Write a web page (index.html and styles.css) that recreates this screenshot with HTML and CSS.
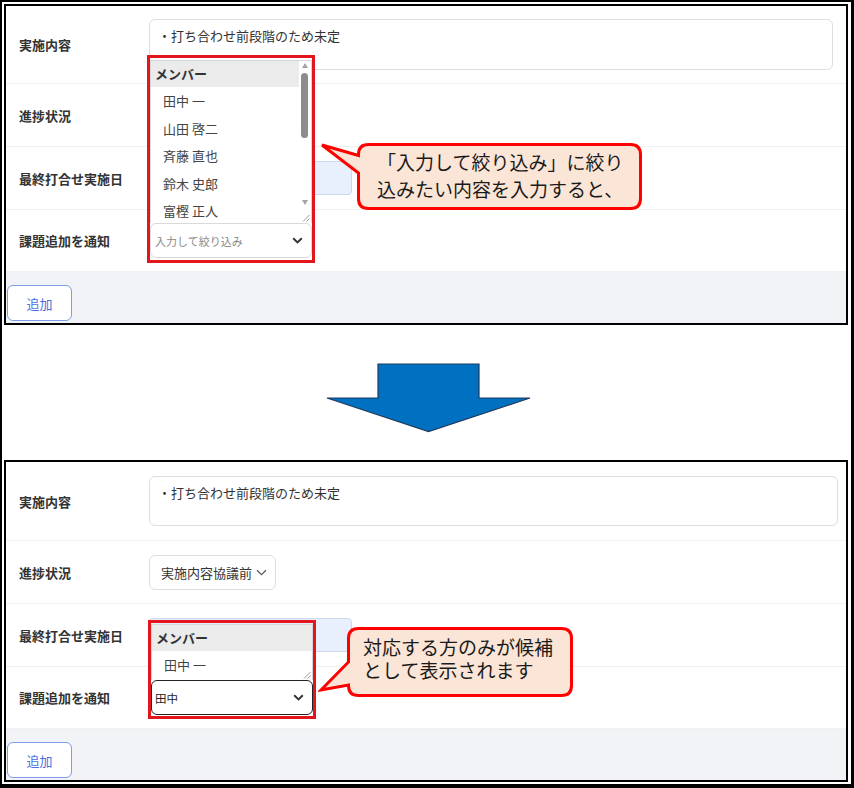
FILE: index.html
```html
<!DOCTYPE html>
<html lang="ja">
<head>
<meta charset="utf-8">
<title>課題追加の通知先</title>
<link rel="stylesheet" href="styles.css">
</head>
<body>
<div class="frame">

  <!-- before: full member list open -->
  <section class="panel">
    <div class="row row-note">
      <div class="label">実施内容</div>
      <div class="note">・打ち合わせ前段階のため未定</div>
    </div>
    <div class="row">
      <div class="label">進捗状況</div>
    </div>
    <div class="row">
      <div class="label">最終打合せ実施日</div>
      <div class="date"></div>
    </div>
    <div class="row">
      <div class="label">課題追加を通知</div>
      <div class="picker">
        <div class="combo">
          <span class="placeholder">入力して絞り込み</span>
          <svg class="chev" width="11" height="7" viewBox="0 0 11 7"><path d="M1.2 1.2 L5.5 5.4 L9.8 1.2" fill="none" stroke="#333" stroke-width="2"/></svg>
        </div>
        <div class="listbox listbox-long">
          <div class="options">
            <div class="group">メンバー</div>
            <div class="option">田中 一</div>
            <div class="option">山田 啓二</div>
            <div class="option">斉藤 直也</div>
            <div class="option">鈴木 史郎</div>
            <div class="option">富樫 正人</div>
          </div>
          <div class="scrollbar">
            <span class="tri tri-up"></span>
            <span class="thumb"></span>
            <span class="tri tri-down"></span>
          </div>
          <svg class="grip" width="8" height="8" viewBox="0 0 8 8"><path d="M7.5 1 L1 7.5 M7.5 4.5 L4.5 7.5" stroke="#999" stroke-width="1"/></svg>
        </div>
        <div class="mark mark-long"></div>
      </div>
    </div>
    <div class="footer"><button class="add">追加</button></div>
  </section>

  <div class="between">
    <svg class="down-arrow" width="205" height="70" viewBox="0 0 205 70">
      <polygon points="52,1 153,1 153,35 204,35 102.5,68.5 1,35 52,35" fill="#0070c0" stroke="#1d3b60" stroke-width="1.2"/>
    </svg>
  </div>

  <!-- after: list filtered by the typed name -->
  <section class="panel panel-after">
    <div class="row row-note">
      <div class="label">実施内容</div>
      <div class="note">・打ち合わせ前段階のため未定</div>
    </div>
    <div class="row">
      <div class="label">進捗状況</div>
      <div class="select">実施内容協議前
        <svg class="thin-chev" width="11" height="7" viewBox="0 0 11 7"><path d="M1 1.2 L5.5 5.6 L10 1.2" fill="none" stroke="#555" stroke-width="1.2"/></svg>
      </div>
    </div>
    <div class="row">
      <div class="label">最終打合せ実施日</div>
      <div class="date"></div>
    </div>
    <div class="row">
      <div class="label">課題追加を通知</div>
      <div class="picker picker-after">
        <div class="combo combo-focus">
          <span class="value">田中</span>
          <svg class="chev" width="11" height="7" viewBox="0 0 11 7"><path d="M1.2 1.2 L5.5 5.4 L9.8 1.2" fill="none" stroke="#333" stroke-width="2"/></svg>
        </div>
        <div class="listbox listbox-short">
          <div class="options">
            <div class="group">メンバー</div>
            <div class="option">田中 一</div>
          </div>
          <svg class="grip" width="8" height="8" viewBox="0 0 8 8"><path d="M7.5 1 L1 7.5 M7.5 4.5 L4.5 7.5" stroke="#999" stroke-width="1"/></svg>
        </div>
        <div class="mark mark-short"></div>
      </div>
    </div>
    <div class="footer"><button class="add">追加</button></div>
  </section>

  <div class="callout callout-top">
    <svg class="bubble" width="325" height="72" viewBox="0 0 325 72">
      <path d="M48.5 3.5 H310.5 Q320.5 3.5 320.5 13.5 V57.5 Q320.5 67.5 310.5 67.5 H48.5 Q38.5 67.5 38.5 57.5 V32 L2 4 L38.5 14.5 V13.5 Q38.5 3.5 48.5 3.5 Z" fill="#fbe5d6" stroke="#f00" stroke-width="3" stroke-linejoin="miter"/>
    </svg>
    <p class="callout-text">「入力して絞り込み」に絞り<br>込みたい内容を入力すると、</p>
  </div>

  <div class="callout callout-bottom">
    <svg class="bubble" width="258" height="76" viewBox="0 0 258 76">
      <path d="M40.5 4.5 H243.5 Q253.5 4.5 253.5 14.5 V61.5 Q253.5 71.5 243.5 71.5 H40.5 Q30.5 71.5 30.5 61.5 V61 L3 66 L30.5 38 V14.5 Q30.5 4.5 40.5 4.5 Z" fill="#fbe5d6" stroke="#f00" stroke-width="3" stroke-linejoin="miter"/>
    </svg>
    <p class="callout-text">対応する方のみが候補<br>として表示されます</p>
  </div>

</div>
</body>
</html>
```

FILE: styles.css
```css
* {
  box-sizing: border-box;
}

body {
  margin: 0;
  background: #fff;
  font-family: "Noto Sans CJK JP", "Noto Sans", sans-serif;
  color: #333;
}

.frame {
  position: relative;
  width: 854px;
  height: 788px;
  border-style: solid;
  border-color: #000;
  border-width: 2px 3px 4px 2px;
  padding: 2px 3px 2px 2px;
  display: flex;
  flex-direction: column;
}

/* form panels */
.panel {
  height: 321px;
  border: 2px solid #000;
  background: #fff;
  display: flex;
  flex-direction: column;
}

.panel-after {
  height: 322px;
}

.row {
  display: flex;
  align-items: center;
  height: 63px;
  padding: 0 13px;
  border-bottom: 1px solid #f0f0f0;
  flex-shrink: 0;
}

.row:nth-child(4) {
  height: 62px;
}

.row-note {
  height: 78px;
}

.panel-after .row-note {
  height: 79px;
}

.label {
  width: 130px;
  flex-shrink: 0;
  font-size: 13px;
  font-weight: bold;
  color: #333;
}

.note {
  flex: 1;
  height: 51px;
  border: 1px solid #dedede;
  border-radius: 6px;
  padding: 7px 8px;
  font-size: 13px;
  line-height: 18px;
  color: #333;
}

.panel-after .note {
  margin-right: -5px;
  height: 50px;
}

.select {
  height: 35px;
  width: 127px;
  border: 1px solid #dedede;
  border-radius: 6px;
  padding: 0 8px 0 11px;
  display: flex;
  align-items: center;
  justify-content: space-between;
  font-size: 13px;
  color: #333;
}

.date {
  width: 203px;
  height: 34px;
  background: #e8f0fe;
  border: 1px solid #cbd8ee;
  border-radius: 4px;
}

/* member picker */
.picker {
  position: relative;
  width: 162px;
  height: 35px;
  margin-left: 1px;
}

.picker-after {
  margin-left: 2px;
}

.combo {
  position: relative;
  z-index: 2;
  height: 35px;
  border: 1px solid #d9d9d9;
  border-radius: 6px;
  background: #fff;
  display: flex;
  align-items: center;
  justify-content: space-between;
  padding: 0 8px 0 4px;
}

.combo-focus {
  border: 1.5px solid #222;
  padding-left: 3px;
}

.placeholder {
  font-size: 11px;
  color: #8a8a8a;
}

.value {
  font-size: 11.5px;
  color: #222;
}

.listbox {
  position: absolute;
  left: 0;
  right: 0;
  bottom: 100%;
  z-index: 2;
  background: #fff;
  border: 1px solid #d6d6d6;
  border-bottom: none;
  display: flex;
  overflow: hidden;
}

.listbox-long {
  height: 163px;
}

.listbox-short {
  height: 56px;
}

.options {
  flex: 1;
  overflow: hidden;
}

.group {
  height: 26px;
  line-height: 26px;
  padding-left: 4px;
  background: #ebebeb;
  font-size: 13px;
  font-weight: bold;
  color: #333;
}

.option {
  height: 27.6px;
  line-height: 27.6px;
  padding-left: 12px;
  font-size: 13px;
  color: #444;
}

.scrollbar {
  position: relative;
  width: 12px;
  flex-shrink: 0;
}

.tri {
  position: absolute;
  left: 3px;
  width: 0;
  height: 0;
  border-left: 3.5px solid transparent;
  border-right: 3.5px solid transparent;
}

.tri-up {
  top: 2px;
  border-bottom: 5px solid #a3a3a3;
}

.tri-down {
  top: 139px;
  border-top: 5px solid #a3a3a3;
}

.thumb {
  position: absolute;
  left: 2px;
  top: 12px;
  width: 7px;
  height: 65px;
  border-radius: 4px;
  background: #8c8c8c;
}

.grip {
  position: absolute;
  right: 1px;
  bottom: 1px;
}

.mark {
  position: absolute;
  z-index: 3;
  left: -3px;
  right: -3px;
  border: 3px solid #e3161d;
  pointer-events: none;
}

.mark-long {
  top: -168px;
  bottom: -5px;
}

.mark-short {
  top: -60px;
  bottom: -4px;
}

.footer {
  flex: 1;
  background: #f2f3f6;
  padding: 13px 0 0 1px;
}

.add {
  width: 65px;
  height: 36px;
  border: 1px solid #7d9de8;
  border-radius: 6px;
  background: #fff;
  color: #4a6fe0;
  font-family: inherit;
  font-size: 13px;
  padding: 0;
}

/* arrow between the two states */
.between {
  height: 135px;
  flex-shrink: 0;
  display: flex;
  justify-content: center;
  padding-top: 38px;
}

.down-arrow {
  margin-left: 5px;
}

/* speech bubbles */
.callout {
  position: absolute;
  z-index: 5;
}

.bubble {
  position: absolute;
  left: 0;
  top: 0;
}

.callout-text {
  position: relative;
  margin: 0;
  font-size: 19px;
  color: #1a1a1a;
  white-space: nowrap;
}

.callout-top {
  left: 318px;
  top: 139px;
  width: 325px;
  height: 72px;
  padding: 8px 0 0 57px;
}

.callout-top .callout-text {
  line-height: 26.5px;
}

.callout-bottom {
  left: 316px;
  top: 622px;
  width: 258px;
  height: 76px;
  padding: 11px 0 0 45px;
}

.callout-bottom .callout-text {
  line-height: 23px;
}
```
